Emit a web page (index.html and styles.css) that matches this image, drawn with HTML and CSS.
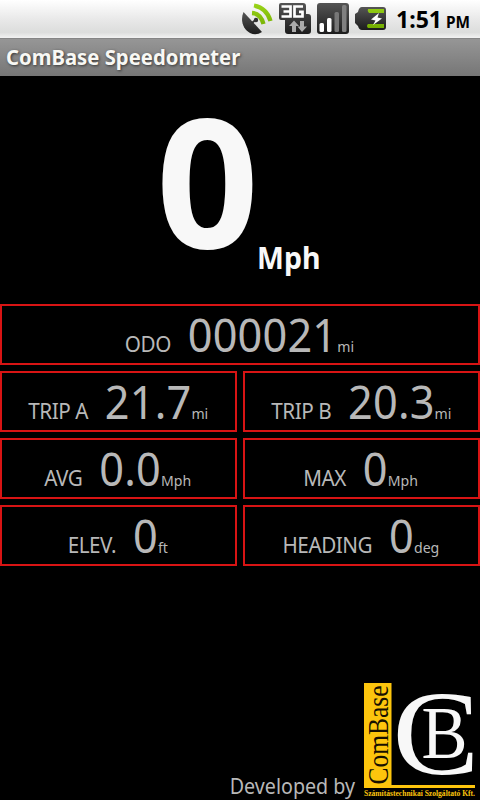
FILE: index.html
```html
<!DOCTYPE html>
<html lang="en">
<head>
<meta charset="utf-8">
<title>ComBase Speedometer</title>
<link rel="stylesheet" href="styles.css">
</head>
<body>
<div class="status">
  <svg class="icons" width="150" height="38" viewBox="238 0 150 38" aria-hidden="true">
    <defs>
      <linearGradient id="dark" x1="0" y1="0" x2="0" y2="1"><stop offset="0" stop-color="#555"/><stop offset="1" stop-color="#1c1c1c"/></linearGradient>
      <linearGradient id="green" gradientUnits="userSpaceOnUse" x1="0" y1="3" x2="0" y2="29"><stop offset="0" stop-color="#9bd51a"/><stop offset="1" stop-color="#72ac00"/></linearGradient>
    </defs>
    <path d="M243.500 12C240 20 243 29 250 33Q256 36 262 32Z" fill="url(#dark)"/>
    <path d="M252 23L256 19.500" stroke="#333" stroke-width="2"/>
    <circle cx="256" cy="20" r="2.200" fill="#333"/>
    <path d="M252 13Q260.500 13.500 263.500 24M254 5.500Q267 8 270.500 21" fill="none" stroke="url(#green)" stroke-width="4.300"/>
    <path d="M281 3H303Q306 3 306 6V14H308Q311 14 311 17V31Q311 34 308 34H288Q285 34 285 31V20H281Q279 20 279 18V5Q279 3 281 3Z" fill="url(#dark)"/>
    <path d="M281.500 6.500H290.500V16.500H281.500M283.500 11.500H290M303 6.500H294.500V16.500H302.500V11.800H299" fill="none" stroke="#fff" stroke-width="2.700"/>
    <path d="M294 20.500L299 26H296V32H292V26H289ZM302 32L297.500 26.500H300V21H304V26.500H307Z" fill="#aaa"/>
    <rect x="317" y="3" width="32" height="31" rx="3" fill="url(#dark)"/>
    <rect x="319.500" y="23" width="4.500" height="9" rx="1.500" fill="#fff"/>
    <rect x="327" y="18" width="4.500" height="14" rx="1.500" fill="#fff"/>
    <rect x="334.500" y="12" width="4.500" height="20" rx="1.500" fill="#777"/>
    <rect x="342" y="5" width="4.500" height="27" rx="1.500" fill="#808080"/>
    <path d="M362 7H383Q386 7 386 10V27Q386 30 383 30H362Q359 30 358 26L355 23V14L358 12Q359 7 362 7Z" fill="url(#dark)"/>
    <path d="M368 9H384V13H369Q367 11 368 9ZM368 24H384V28H368Q366 26 368 24Z" fill="url(#green)"/>
    <path d="M379 13L371 19.500L375.500 20.500L373 25L382 18.500L377.500 17.500Z" fill="#fff"/>
  </svg>
  <div class="clock">1:51 <small>PM</small></div>
</div>
<header class="title"><h1>ComBase Speedometer</h1></header>
<main>
  <section class="speed"><span class="digit">0</span><span class="speed-unit">Mph</span></section>
  <section class="readings">
    <div class="cell wide"><div class="row"><span class="label">ODO</span><span class="value">000021</span><span class="unit">mi</span></div></div>
    <div class="cell"><div class="row"><span class="label">TRIP A</span><span class="value">21.7</span><span class="unit">mi</span></div></div>
    <div class="cell"><div class="row"><span class="label">TRIP B</span><span class="value">20.3</span><span class="unit">mi</span></div></div>
    <div class="cell"><div class="row"><span class="label">AVG</span><span class="value">0.0</span><span class="unit">Mph</span></div></div>
    <div class="cell"><div class="row"><span class="label">MAX</span><span class="value">0</span><span class="unit">Mph</span></div></div>
    <div class="cell"><div class="row"><span class="label">ELEV.</span><span class="value">0</span><span class="unit">ft</span></div></div>
    <div class="cell"><div class="row"><span class="label">HEADING</span><span class="value">0</span><span class="unit">deg</span></div></div>
  </section>
</main>
<footer>
  <span class="credit">Developed by</span>
  <svg class="logo" width="120" height="120" viewBox="360 680 120 120">
    <path d="M364 683H391.500V785H475V788H364Z" fill="#fdc50d"/>
    <text transform="translate(387.500 784.500) rotate(-90)" font-size="30" textLength="99" lengthAdjust="spacingAndGlyphs" fill="#171000">ComBase</text>
    <text x="392.500" y="773.500" font-size="121" textLength="87" lengthAdjust="spacingAndGlyphs" fill="#f8f8f8">C</text>
    <text x="421.500" y="758" font-size="75" textLength="46" lengthAdjust="spacingAndGlyphs" fill="#f8f8f8" stroke="#000" stroke-width="3" paint-order="stroke">B</text>
    <text x="364" y="796" font-size="7.500" font-weight="bold" textLength="111" lengthAdjust="spacingAndGlyphs" fill="#fdc50d">Számítástechnikai Szolgáltató Kft.</text>
  </svg>
</footer>
</body>
</html>
```
FILE: styles.css
```css
* { box-sizing: border-box; }
body {
  margin: 0;
  width: 480px;
  height: 800px;
  overflow: hidden;
  display: flex;
  flex-direction: column;
  background: #000;
  color: #b8b8b8;
  font-family: "Noto Sans", "Open Sans", sans-serif;
}
.status {
  height: 38px;
  flex: none;
  display: flex;
  justify-content: flex-end;
  background: linear-gradient(#fff, #e9e9e9 50%, #dcdddc 85%, #f2f2f2);
}
.icons { flex: none; }
.clock {
  width: 92px;
  padding-left: 8px;
  line-height: 38px;
  font-size: 24px;
  font-weight: bold;
  color: #000;
  white-space: nowrap;
  transform: scaleX(.96);
  transform-origin: 8px 0;
}
.clock small { font-size: 16px; margin-left: -2px; }
.title {
  height: 38px;
  flex: none;
  padding-left: 6px;
  background: linear-gradient(#969696, #767676);
  border-top: 1px solid #858585;
}
h1 {
  margin: 0;
  width: max-content;
  font-size: 22px;
  line-height: 34px;
  color: #f8f8f4;
  text-shadow: 1px 1px 3px #333;
  transform: scaleX(.922);
  transform-origin: 0 0;
}
.speed {
  height: 228px;
  display: flex;
  justify-content: center;
  align-items: flex-start;
  color: #f8f8f8;
  font-weight: bold;
}
.digit { font-size: 180px; line-height: 206px; transform: translateX(2px); }
.speed-unit {
  font-size: 31px;
  line-height: 40px;
  margin-top: 161px;
  transform: scaleX(.92);
  transform-origin: 0 0;
}
.readings {
  display: grid;
  grid-template-columns: 237px 237px;
  grid-auto-rows: 61px;
  gap: 6px;
}
.cell {
  border: 2px solid #d81414;
  display: flex;
  justify-content: center;
}
.wide { grid-column: span 2; }
.row {
  display: flex;
  align-items: baseline;
  height: 57px;
  line-height: 57px;
  white-space: nowrap;
  transform: translateX(-.5px) scaleX(.94);
}
.label { font-size: 22px; letter-spacing: -.5px; margin-right: 18px; }
.value { font-size: 46px; letter-spacing: .2px; }
.unit { font-size: 15px; }
footer {
  margin-top: auto;
  height: 120px;
  display: flex;
  justify-content: flex-end;
  align-items: flex-end;
}
.credit {
  font-size: 22px;
  line-height: 29px;
  margin-right: 5px;
  white-space: nowrap;
  transform: scaleX(.895);
  transform-origin: 100% 0;
}
.logo { font-family: "Liberation Serif", serif; flex: none; }
```
